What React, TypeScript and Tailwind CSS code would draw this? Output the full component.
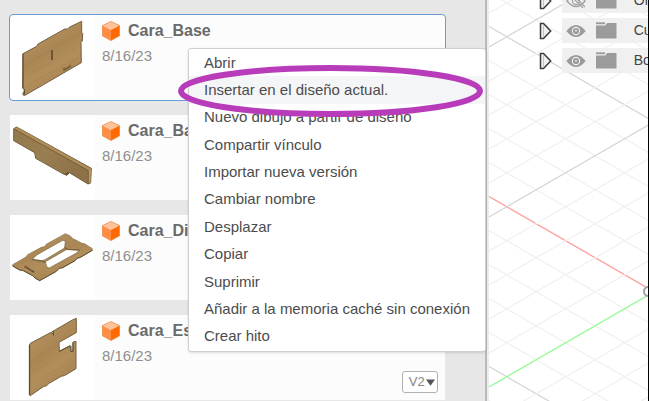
import type { ReactNode } from "react"

interface Design {
  name: string
  date: string
  thumbnail: ReactNode
  version?: string
}

const MENU_ITEMS = [
  "Abrir",
  "Insertar en el diseño actual.",
  "Nuevo dibujo a partir de diseño",
  "Compartir vínculo",
  "Importar nueva versión",
  "Cambiar nombre",
  "Desplazar",
  "Copiar",
  "Suprimir",
  "Añadir a la memoria caché sin conexión",
  "Crear hito",
]

const BROWSER_ROWS = [
  { label: "Or", visible: false },
  { label: "Cu", visible: true },
  { label: "Bo", visible: true },
]

// ------------------------------------------------------------
// Part thumbnails
// ------------------------------------------------------------

function WoodGrain() {
  return (
    <defs>
      <linearGradient id="wood" x1="0" y1="0" x2="0.5" y2="1">
        <stop offset="0" stopColor="#a98756" />
        <stop offset="0.3" stopColor="#b08d5a" />
        <stop offset="0.5" stopColor="#a98654" />
        <stop offset="0.7" stopColor="#b18e5a" />
        <stop offset="1" stopColor="#a58251" />
      </linearGradient>
      <linearGradient id="woodDark" x1="0" y1="0" x2="1" y2="0.5">
        <stop offset="0" stopColor="#92784d" />
        <stop offset="0.5" stopColor="#997e51" />
        <stop offset="1" stopColor="#8d7248" />
      </linearGradient>
    </defs>
  )
}

function BaseThumb() {
  return (
    <svg viewBox="30 45 255 255" className="size-full" aria-hidden="true">
      <WoodGrain />
      <path
        d="M69 161 L110 139 L114 132 L194 87 L203 87 L209 81 L245 64 L245 97 L248 100 L247 123 L243 127 L244 188 L75 286 L69 285 L69 278 L73 275 L72 266 L68 265 Z"
        fill="url(#wood)"
        stroke="#766242"
        strokeWidth="3"
      />
      <path d="M69 161 V264 M73 268 V284" stroke="#574830" strokeWidth="3" />
      <path d="M80 190 L235 105 M80 225 L235 142 M80 258 L235 172" stroke="#987545" strokeWidth="2" opacity="0.3" />
      <path d="M156 150 V180" stroke="#5e4c2e" strokeWidth="5" />
      <path d="M190 211 L213 198" stroke="#6b5735" strokeWidth="5" strokeDasharray="6 1" />
      <path d="M186 205 L196 203 M206 195 L212 194" stroke="#7d653e" strokeWidth="2" />
    </svg>
  )
}

function BarThumb() {
  return (
    <svg viewBox="30 30 255 255" className="size-full" aria-hidden="true">
      <path
        d="M41 71 L50 66 L274 190 L272 234 L264 237 L208 203 L201 211 L192 208 L107 160 L104 143 L41 107 Z"
        fill="url(#woodDark)"
        stroke="#766242"
        strokeWidth="3"
      />
      <path d="M43 71 L51 67 L273 191 L265 196 Z" fill="#b08d57" />
      <path d="M265 196 L273 191 L271 233 L265 235 Z" fill="#bd9860" />
      <path d="M42 72 L265 197 V236" fill="none" stroke="#655234" strokeWidth="2" />
      <path d="M196 207 L205 200 L206 206 L200 211 Z" fill="#5b4a2f" />
    </svg>
  )
}

function FrameThumb() {
  return (
    <svg viewBox="30 30 255 255" className="size-full" aria-hidden="true">
      <path
        d="M38 179 L78 156 L83 149 L124 127 L133 125 L140 117 L196 86 L211 93 L217 100 L246 115 L254 116 L277 131 L277 136 L241 157 L231 160 L225 167 L188 188 L177 190 L169 199 L119 227 L105 219 L98 212 L68 196 L59 195 L38 183 Z"
        fill="url(#wood)"
        stroke="#86704b"
        strokeWidth="2"
      />
      <path
        d="M38 183 L59 195 L68 196 L98 212 L105 219 L119 227 L169 199 L177 190 L188 188 L225 167 L231 160 L241 157 L277 136"
        fill="none"
        stroke="#5f4e31"
        strokeWidth="3"
      />
      <path
        d="M96 164 L110 150 L188 106 L196 108 L194 129 L135 164 L122 169 Z"
        fill="#fff"
        stroke="#766242"
        strokeWidth="2"
      />
      <path
        d="M201 133 L240 135 L226 146 L148 189 L141 187 L136 170 Z"
        fill="#fff"
        stroke="#766242"
        strokeWidth="2"
      />
      <path d="M97 163 L125 168 L136 172 M193 128 L203 133 L237 135" fill="none" stroke="#7d653e" strokeWidth="4" />
      <path d="M74 184 L103 202" stroke="#5e4c2e" strokeWidth="5" strokeDasharray="7 1" />
    </svg>
  )
}

function SideThumb() {
  return (
    <svg viewBox="30 45 255 255" className="size-full" aria-hidden="true">
      <path
        d="M88 135 L91 130 L153 97 L160 102 L160 93 L217 60 L229 55 L229 98 L177 127 L178 154 L210 137 L212 155 L219 153 L219 126 L228 124 L228 206 L193 227 L184 229 L147 250 L140 257 L130 260 L91 287 L88 285 Z"
        fill="url(#wood)"
        stroke="#766242"
        strokeWidth="3"
      />
      <path d="M89 135 V285" stroke="#574830" strokeWidth="3" />
      <path d="M178 154 L210 138 M213 137 V154 H219 V128 M155 96 L160 93 V107" fill="none" stroke="#5b4a2f" strokeWidth="3" />
      <path d="M95 180 L170 138 M95 215 L222 147 M95 248 L222 182" stroke="#987545" strokeWidth="2" opacity="0.3" />
    </svg>
  )
}

const DESIGNS: Design[] = [
  { name: "Cara_Base", date: "8/16/23", thumbnail: <BaseThumb /> },
  { name: "Cara_Ba", date: "8/16/23", thumbnail: <BarThumb /> },
  { name: "Cara_Di", date: "8/16/23", thumbnail: <FrameThumb /> },
  { name: "Cara_Es", date: "8/16/23", thumbnail: <SideThumb />, version: "V2" },
]

// ------------------------------------------------------------
// Icons
// ------------------------------------------------------------

function CubeIcon() {
  return (
    <svg viewBox="0 0 18 20" className="h-5 w-[18px] shrink-0" aria-hidden="true">
      <path d="M9 0.5 L17.6 4.6 L9 9 L0.4 4.6 Z" fill="#ffc39c" />
      <path d="M0.4 4.6 L9 9 V19.6 L0.4 14.8 Z" fill="#ff8d42" />
      <path d="M17.6 4.6 L9 9 V19.6 L17.6 14.8 Z" fill="#ff6a00" />
      <path
        d="M9 0.5 L17.6 4.6 V14.8 L9 19.6 L0.4 14.8 V4.6 Z"
        fill="none"
        stroke="#e9813f"
        strokeWidth="0.7"
      />
    </svg>
  )
}

function ExpandIcon() {
  return (
    <svg viewBox="0 0 13 18" className="h-[18px] w-[13px]" aria-hidden="true">
      <path d="M1.5 1.5 H4.5 L11.7 9 L4.5 16.5 H1.5 Z" fill="#f0f0f0" stroke="#3c3c3c" strokeWidth="1.5" />
      <path d="M4.5 3.5 V14.5" stroke="#c4c4c4" strokeWidth="1" />
    </svg>
  )
}

function EyeIcon({ visible }: { visible: boolean }) {
  if (!visible) {
    return (
      <svg viewBox="0 0 20 14" className="h-[14px] w-5" aria-hidden="true">
        <path d="M1 7 Q10 -4 19 7 Q10 18 1 7 Z" fill="none" stroke="#a0a0a0" strokeWidth="1.3" />
        <circle cx="10" cy="7" r="3.5" fill="none" stroke="#a0a0a0" strokeWidth="1.3" />
        <path d="M3 0 L17 14 M6 0 L19 13" stroke="#a0a0a0" strokeWidth="1.2" />
      </svg>
    )
  }
  return (
    <svg viewBox="0 0 20 14" className="h-[14px] w-5" aria-hidden="true">
      <path d="M0.3 7 Q10 -5 19.7 7 Q10 19 0.3 7 Z" fill="#9b9b9b" />
      <circle cx="10" cy="7" r="4.2" fill="#f0f0f0" />
      <circle cx="10" cy="7" r="3.1" fill="#9b9b9b" />
      <circle cx="10" cy="6.8" r="1" fill="#e0e0e0" />
    </svg>
  )
}

function FolderIcon() {
  return (
    <svg viewBox="0 0 21 17" className="h-[17px] w-[21px]" aria-hidden="true">
      <path d="M0 0.3 H9 V2.2 H0 Z" fill="#9b9b9b" />
      <path d="M0 3.4 H9.3 L11 1 H20.5 V16.4 H0 Z" fill="#9b9b9b" />
    </svg>
  )
}

// ------------------------------------------------------------
// Data panel
// ------------------------------------------------------------

function DesignCard({ design, selected }: { design: Design; selected: boolean }) {
  return (
    <article
      className={
        selected
          ? "relative flex rounded-[3px] bg-[#fcfcfc] outline outline-[#6a9dd8]"
          : "relative flex bg-[#fcfcfc]"
      }
    >
      <div className="size-[85px] shrink-0 bg-white">{design.thumbnail}</div>
      <div className="flex min-w-0 flex-col gap-[7px] pt-[6px] pl-[7px]">
        <div className="flex items-center gap-2">
          <CubeIcon />
          <h2 className="text-[16px] leading-5 font-bold text-[#6a6a6a]">{design.name}</h2>
        </div>
        <time className="text-[15px] leading-4 text-[#8f8f8f]">{design.date}</time>
      </div>
      {design.version && (
        <button
          type="button"
          className="absolute right-[7px] bottom-[7px] flex h-[22px] items-center rounded-[3px] border border-[#b0b0b0] bg-white pr-[2px] pl-[6px] text-[13px] text-[#858585]"
        >
          {design.version}
          <svg viewBox="0 0 9 7" className="ml-px h-[7px] w-[9px]" aria-hidden="true">
            <path d="M0 0.5 H9 L4.5 6.8 Z" fill="#555" />
          </svg>
        </button>
      )}
    </article>
  )
}

function ContextMenu() {
  return (
    <div
      role="menu"
      className="absolute top-12 left-[188px] z-10 grid min-h-[304px] w-[298px] auto-rows-fr rounded-[3px] border border-[#cfcfcf] bg-white pb-px shadow-sm"
    >
      {MENU_ITEMS.map((item, i) => (
        <button
          key={item}
          type="button"
          role="menuitem"
          className={
            i === 1
              ? "bg-[#f4f5f7] pl-[15px] text-left text-[15px] leading-5 whitespace-nowrap text-[#4c4c4c]"
              : "pl-[15px] text-left text-[15px] leading-5 whitespace-nowrap text-[#4c4c4c]"
          }
        >
          {item}
        </button>
      ))}
    </div>
  )
}

// Hand-drawn ring around the highlighted command
function HighlightRing() {
  return (
    <svg
      viewBox="0 0 306 54"
      className="pointer-events-none absolute top-16 left-[178px] z-20 h-[54px] w-[306px]"
      aria-hidden="true"
    >
      <ellipse cx="152.5" cy="27" rx="149.5" ry="23" fill="none" stroke="#b83cba" strokeWidth="6" />
    </svg>
  )
}

// ------------------------------------------------------------
// Canvas
// ------------------------------------------------------------

const GRID_STEPS = Array.from({ length: 20 }, (_, i) => i - 5)

function CanvasGrid() {
  return (
    <svg className="absolute inset-0 size-full" aria-hidden="true">
      {GRID_STEPS.map((n) => {
        const down = 26.5 + n * 34
        const up = 47 + n * 34
        const major = n % 5 === 0
        const downColor = n === 5 ? "#ff9c9c" : major ? "#d6d6d6" : "#f1f1f1"
        const upColor = n === 10 ? "#93fb93" : major ? "#d6d6d6" : "#f1f1f1"
        return (
          <g key={n} strokeWidth="1.3">
            <line x1="0" y1={down} x2="1000" y2={down + 577} stroke={downColor} />
            <line x1="0" y1={up} x2="1000" y2={up - 577} stroke={upColor} />
          </g>
        )
      })}
      <circle cx="159.5" cy="291.5" r="4.5" fill="#fff" stroke="#a0a0a0" strokeWidth="2" />
    </svg>
  )
}

function BrowserTree() {
  return (
    <ul className="relative -mt-3 flex flex-col gap-[5px] pl-[50px]">
      {BROWSER_ROWS.map((row) => (
        <li key={row.label} className="flex h-[25px] items-center gap-[10px]">
          <button type="button" aria-label={`Expandir ${row.label}`} className="shrink-0">
            <ExpandIcon />
          </button>
          <div className="flex h-full min-w-0 flex-1 items-center overflow-hidden bg-[#f0f0f0] pl-1">
            <button type="button" aria-label={`Visibilidad de ${row.label}`} className="shrink-0">
              <EyeIcon visible={row.visible} />
            </button>
            <span className="ml-[10px] shrink-0">
              <FolderIcon />
            </span>
            <span className="ml-[17px] text-[14px] text-[#444]">{row.label}</span>
          </div>
        </li>
      ))}
    </ul>
  )
}

export default function App() {
  return (
    <div className="flex h-screen overflow-hidden bg-white font-['Liberation_Sans',Arial,sans-serif]">
      <aside className="relative w-3/4 shrink-0 border-r-2 border-[#b9b9b9] bg-[#e7e7e7]">
        <div className="flex flex-col gap-[15px] pt-[15px] pr-10 pl-[10px]">
          {DESIGNS.map((design, i) => (
            <DesignCard key={design.name} design={design} selected={i === 0} />
          ))}
        </div>
        <ContextMenu />
        <HighlightRing />
      </aside>
      <div className="w-[2px] shrink-0 bg-[#ededed]" />
      <main className="relative min-w-0 flex-1 overflow-hidden border-r border-black">
        <CanvasGrid />
        <BrowserTree />
      </main>
    </div>
  )
}
